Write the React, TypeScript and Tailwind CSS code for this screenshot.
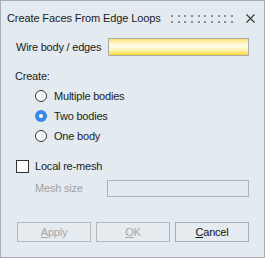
import React from "react";

function Radio({ checked, label }: { checked?: boolean; label: string }) {
  return (
    <div className="flex h-[20px] items-center pl-[34px]">
      {checked ? (
        <span className="flex h-[12px] w-[12px] items-center justify-center rounded-full bg-[#3b86f2]">
          <span className="h-[4px] w-[4px] rounded-full bg-white" />
        </span>
      ) : (
        <span className="h-[12px] w-[12px] rounded-full border border-[#333333] bg-white" />
      )}
      <span className="ml-[7px]">{label}</span>
    </div>
  );
}

function Btn({ children, disabled }: { children: React.ReactNode; disabled?: boolean }) {
  return (
    <div
      className={
        "flex h-[20px] w-[74px] items-center justify-center border bg-[#e5ebef] " +
        (disabled ? "border-[#b3b8bc] text-[#a3a7aa]" : "border-[#a8adb1] text-[#111111]")
      }
    >
      {children}
    </div>
  );
}

export default function App() {
  const dots = Array.from({ length: 10 }, (_, i) => Math.round(i * 6.67));
  return (
    <div
      className="flex h-[258px] w-[265px] flex-col border border-[#a6acb1] bg-[#e4ebf0] text-[11px] tracking-[-0.2px] text-[#1a1a1a]"
      style={{ fontFamily: '"Liberation Sans", Arial, sans-serif' }}
    >
      <div className="flex h-[35px] items-center pl-[6px] pr-[9px]">
        <span className="shrink-0 whitespace-nowrap text-[11px] tracking-[-0.1px]">
          Create Faces From Edge Loops
        </span>
        <div className="flex-1" />
        <svg width="62" height="8" viewBox="0 0 62 8" className="mr-[13px] shrink-0">
          {dots.map((x) => (
            <g key={x}>
              <rect x={x} y={0} width="2" height="2" fill="#8a8d90" />
              <rect x={x} y={6} width="2" height="2" fill="#8a8d90" />
            </g>
          ))}
        </svg>
        <svg width="9" height="9" viewBox="0 0 9 9" className="shrink-0">
          <path d="M0.5 0.5 L8.5 8.5 M8.5 0.5 L0.5 8.5" stroke="#333" strokeWidth="1.1" />
        </svg>
      </div>
      <div className="mt-[2px] flex h-[18px] items-center pl-[15px] pr-[15px]">
        <span>Wire body / edges</span>
        <div className="ml-auto h-[18px] w-[141px] border border-[#a9abab] bg-[linear-gradient(to_bottom,#fbe36f_0%,#fff6c6_25%,#fffde8_45%,#fff3b0_70%,#fbd93c_100%)]" />
      </div>
      <div className="mt-[10px] flex h-[20px] items-center pl-[14px]">Create:</div>
      <Radio label="Multiple bodies" />
      <Radio checked label="Two bodies" />
      <Radio label="One body" />
      <div className="mt-[10px] flex h-[21px] items-center pl-[15px]">
        <span className="h-[13px] w-[13px] border border-[#333333] bg-white" />
        <span className="ml-[6px]">Local re-mesh</span>
      </div>
      <div className="mt-[3px] flex h-[17px] items-center pl-[34px] pr-[15px]">
        <span className="text-[#9ea2a6]">Mesh size</span>
        <div className="ml-auto h-[17px] w-[142px] border border-[#aeb3b7] bg-[#e4ebf0]" />
      </div>
      <div className="mt-auto mb-[15px] flex gap-[5px] pl-[16px]">
        <Btn disabled>
          <span><span className="underline">A</span>pply</span>
        </Btn>
        <Btn disabled>
          <span><span className="underline">O</span>K</span>
        </Btn>
        <Btn>
          <span><span className="underline">C</span>ancel</span>
        </Btn>
      </div>
    </div>
  );
}
